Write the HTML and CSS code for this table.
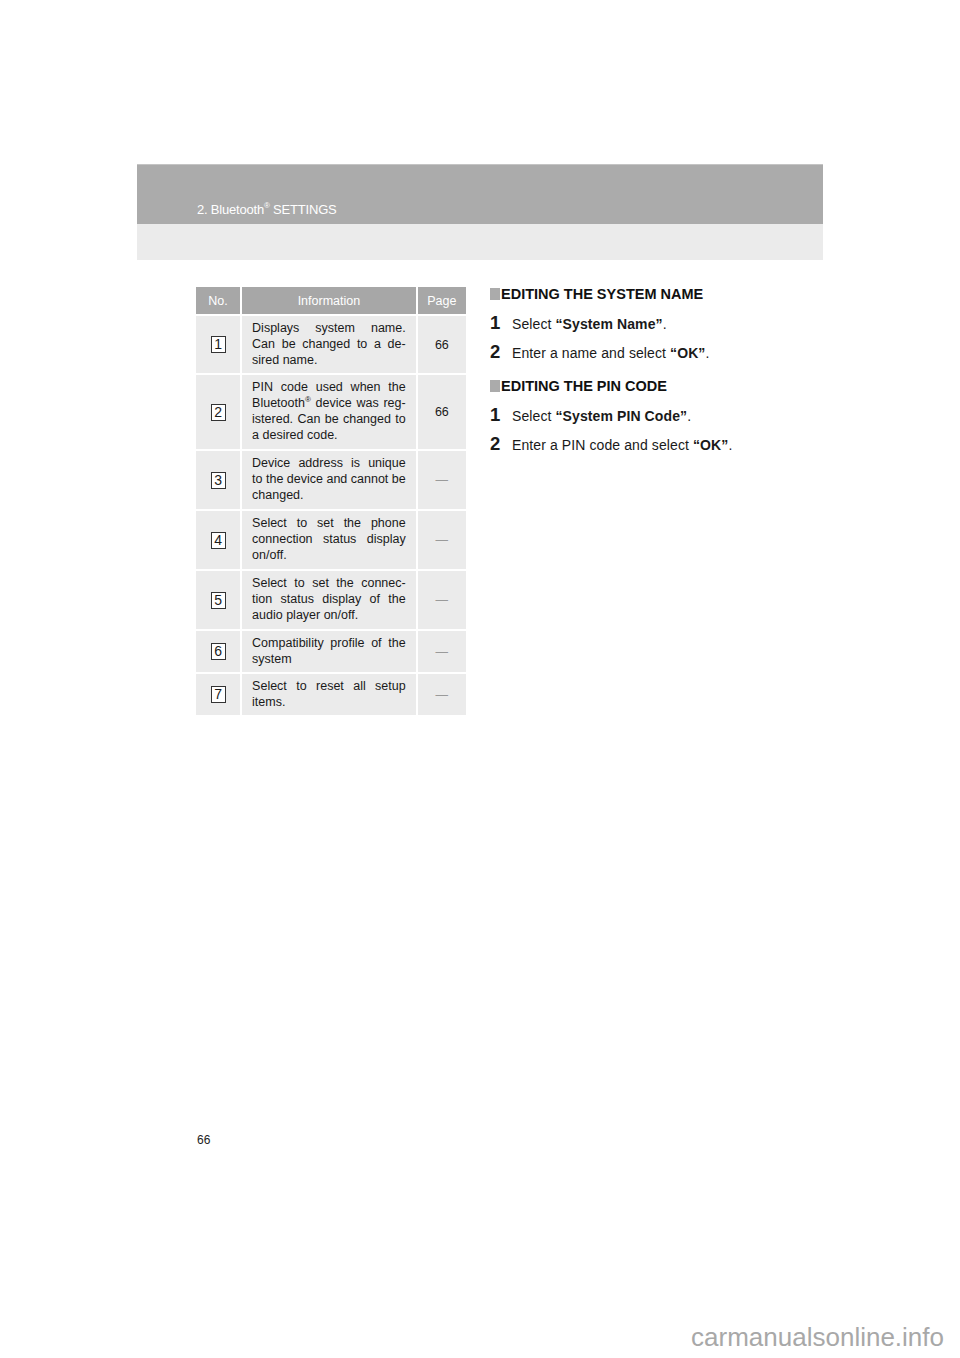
FILE: index.html
```html
<!DOCTYPE html>
<html lang="en">
<head>
    <meta charset="UTF-8">
    <title>2. Bluetooth SETTINGS</title>
    <link rel="stylesheet" href="styles.css">
</head>
<body>
    <div class="page">
        <div class="band">
            <div class="band-top">
                <span class="chapter">2. Bluetooth<sup>®</sup> SETTINGS</span>
            </div>
            <div class="band-bottom"></div>
        </div>

        <div class="content">
            <table class="info">
                <thead>
                    <tr>
                        <th class="col-no">No.</th>
                        <th class="col-info">Information</th>
                        <th class="col-page">Page</th>
                    </tr>
                </thead>
                <tbody>
                    <tr>
                        <td class="col-no"><span class="num">1</span></td>
                        <td class="col-info first">
                            <span class="line">Displays system name.</span>
                            <span class="line">Can be changed to a de-</span>
                            <span class="line last">sired name.</span>
                        </td>
                        <td class="col-page">66</td>
                    </tr>
                    <tr>
                        <td class="col-no"><span class="num">2</span></td>
                        <td class="col-info">
                            <span class="line">PIN code used when the</span>
                            <span class="line">Bluetooth<sup>®</sup> device was reg-</span>
                            <span class="line">istered. Can be changed to</span>
                            <span class="line last">a desired code.</span>
                        </td>
                        <td class="col-page">66</td>
                    </tr>
                    <tr>
                        <td class="col-no"><span class="num">3</span></td>
                        <td class="col-info">
                            <span class="line">Device address is unique</span>
                            <span class="line">to the device and cannot be</span>
                            <span class="line last">changed.</span>
                        </td>
                        <td class="col-page dash">—</td>
                    </tr>
                    <tr>
                        <td class="col-no"><span class="num">4</span></td>
                        <td class="col-info">
                            <span class="line">Select to set the phone</span>
                            <span class="line">connection status display</span>
                            <span class="line last">on/off.</span>
                        </td>
                        <td class="col-page dash">—</td>
                    </tr>
                    <tr>
                        <td class="col-no"><span class="num">5</span></td>
                        <td class="col-info">
                            <span class="line">Select to set the connec-</span>
                            <span class="line">tion status display of the</span>
                            <span class="line last">audio player on/off.</span>
                        </td>
                        <td class="col-page dash">—</td>
                    </tr>
                    <tr>
                        <td class="col-no"><span class="num">6</span></td>
                        <td class="col-info short">
                            <span class="line">Compatibility profile of the</span>
                            <span class="line last">system</span>
                        </td>
                        <td class="col-page dash">—</td>
                    </tr>
                    <tr>
                        <td class="col-no"><span class="num">7</span></td>
                        <td class="col-info short">
                            <span class="line">Select to reset all setup</span>
                            <span class="line last">items.</span>
                        </td>
                        <td class="col-page dash">—</td>
                    </tr>
                </tbody>
            </table>

            <div class="steps">
                <h2 class="heading"><span class="mark"></span>EDITING THE SYSTEM NAME</h2>
                <div class="step"><span class="step-no">1</span>Select <b>“System Name”</b>.</div>
                <div class="step"><span class="step-no">2</span>Enter a name and select <b>“OK”</b>.</div>

                <h2 class="heading second"><span class="mark"></span>EDITING THE PIN CODE</h2>
                <div class="step"><span class="step-no">1</span>Select <b>“System PIN Code”</b>.</div>
                <div class="step"><span class="step-no">2</span>Enter a PIN code and select <b>“OK”</b>.</div>
            </div>
        </div>

        <div class="page-no">66</div>
        <div class="watermark">carmanualsonline.info</div>
    </div>
</body>
</html>
```

FILE: styles.css
```css
* {
    margin: 0;
    padding: 0;
    box-sizing: border-box;
}
body {
    font-family: "Liberation Sans", Arial, sans-serif;
    background-color: #ffffff;
    color: #1a1a1a;
}
.page {
    width: 960px;
    height: 1358px;
    display: flex;
    flex-direction: column;
}
.band {
    margin: 164px 0 0 137px;
    width: 686px;
}
.band-top {
    height: 60px;
    background-color: #ababab;
    border-top: 1px solid #c4c4c4;
    padding: 35px 0 0 60px;
}
.chapter {
    color: #ffffff;
    font-size: 13px;
    letter-spacing: -0.2px;
}
.chapter sup {
    font-size: 8px;
    vertical-align: 6px;
    line-height: 0;
}
.band-bottom {
    height: 36px;
    background-color: #ebebeb;
}
.content {
    display: flex;
    gap: 24px;
    margin: 27px 0 0 196px;
}
/* table on the left */
.info {
    width: 270px;
    border-collapse: collapse;
    font-size: 12.5px;
    line-height: 16px;
}
.info th {
    background-color: #a7a7a7;
    color: #ffffff;
    font-weight: normal;
    height: 28px;
    font-size: 12.5px;
    border-right: 2px solid #ffffff;
}
.info td {
    background-color: #ebebeb;
    border-right: 2px solid #ffffff;
    border-top: 2px solid #ffffff;
    padding: 4px 10px 6px;
    vertical-align: middle;
}
.info td.first,
.info td.short {
    padding-bottom: 5px;
}
.info th:last-child,
.info td:last-child {
    border-right: none;
}
.col-no {
    width: 46px;
    text-align: center;
}
.info td.col-no {
    padding: 0;
}
.col-info {
    width: 174px;
}
/* every printed line is justified except the last one */
.line {
    display: block;
    white-space: nowrap;
    text-align: justify;
    text-align-last: justify;
}
.line.last {
    text-align-last: auto;
}
.col-page {
    width: 50px;
    text-align: center;
}
.info td.col-page {
    padding: 0;
}
.dash {
    color: #9a9a9a;
}
.info sup {
    font-size: 8px;
    vertical-align: 5px;
    line-height: 0;
}
.num {
    display: inline-block;
    width: 15px;
    height: 17px;
    border: 1px solid #333333;
    background-color: #ffffff;
    font-size: 14px;
    line-height: 15px;
    text-align: center;
}
/* steps on the right */
.steps {
    width: 320px;
}
.heading {
    display: flex;
    align-items: center;
    font-size: 14.5px;
    font-weight: bold;
    line-height: 16px;
    color: #111111;
    margin-top: -1px;
    margin-bottom: 12px;
}
.heading.second {
    margin-top: 6px;
}
.mark {
    width: 10px;
    height: 12px;
    background-color: #ababab;
    margin-right: 1px;
}
.step {
    font-size: 14px;
    line-height: 18px;
    height: 29px;
    color: #1a1a1a;
    letter-spacing: 0.1px;
}
.step-no {
    display: inline-block;
    font-size: 18.5px;
    font-weight: bold;
    width: 22px;
}
.page-no {
    margin: 0 0 0 197px;
    padding-top: 418px;
    font-size: 12px;
    color: #222222;
}
.watermark {
    margin: auto 0 0 0;
    align-self: flex-end;
    padding: 0 16px 5px 0;
    font-size: 26px;
    color: #a8a8a8;
}
```
